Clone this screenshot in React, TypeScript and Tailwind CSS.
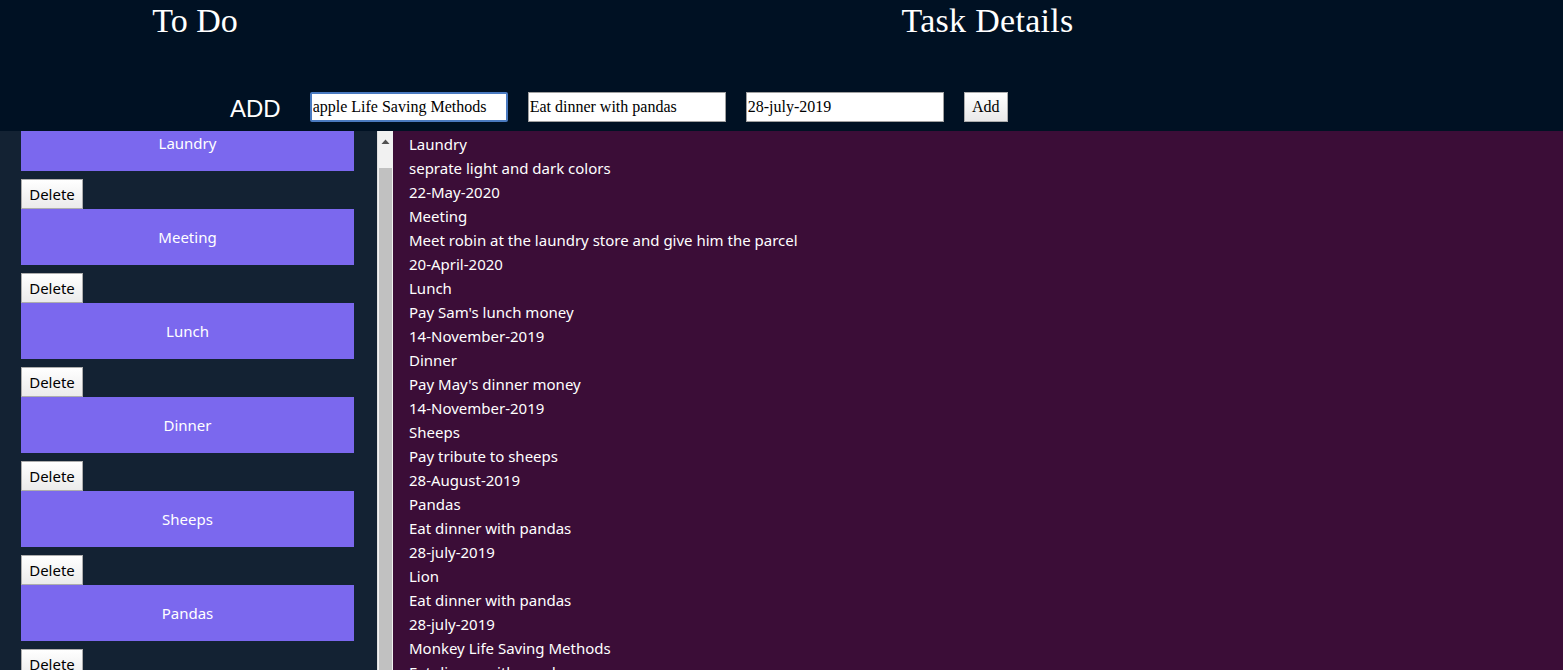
import React from "react";

const tasks = [
  { title: "Laundry", desc: "seprate light and dark colors", date: "22-May-2020" },
  { title: "Meeting", desc: "Meet robin at the laundry store and give him the parcel", date: "20-April-2020" },
  { title: "Lunch", desc: "Pay Sam's lunch money", date: "14-November-2019" },
  { title: "Dinner", desc: "Pay May's dinner money", date: "14-November-2019" },
  { title: "Sheeps", desc: "Pay tribute to sheeps", date: "28-August-2019" },
  { title: "Pandas", desc: "Eat dinner with pandas", date: "28-july-2019" },
  { title: "Lion", desc: "Eat dinner with pandas", date: "28-july-2019" },
  { title: "Monkey Life Saving Methods", desc: "Eat dinner with pandas", date: "28-july-2019" },
];

const sans = "font-['Noto_Sans',sans-serif]";
const serif = "font-['Liberation_Serif',serif]";

export default function App() {
  return (
    <div className="w-[1563px] h-[670px] overflow-hidden flex flex-col">
      <header className="h-[131px] shrink-0 bg-[#001123] flex flex-col">
        <div className={`flex text-white text-[34px] leading-[39px] pt-[1px] ${serif}`}>
          <div className="w-[390px] text-center">To Do</div>
          <div className="flex-1 text-center pl-[22px] tracking-[0.3px]">Task Details</div>
        </div>
        <div className="flex items-center mt-[51px] pl-[230px]">
          <span className="text-white text-[24px] leading-[28px] font-['Liberation_Sans',sans-serif] mt-[4px]">ADD</span>
          <input
            className={`ml-[29px] w-[198px] h-[30px] bg-white border-2 border-[#4a7ac0] rounded-[2px] px-[1px] text-[16px] text-black outline-none ${serif}`}
            defaultValue="apple Life Saving Methods"
          />
          <input
            className={`ml-[20px] w-[198px] h-[30px] bg-white border border-[#a0a0a0] px-[1px] text-[16px] text-black outline-none ${serif}`}
            defaultValue="Eat dinner with pandas"
          />
          <input
            className={`ml-[20px] w-[198px] h-[30px] bg-white border border-[#a0a0a0] px-[1px] text-[16px] text-black outline-none ${serif}`}
            defaultValue="28-july-2019"
          />
          <button
            className={`ml-[20px] w-[44px] h-[30px] bg-gradient-to-b from-white to-[#e9e9e9] border border-[#adadad] text-[16px] text-black ${serif}`}
          >
            Add
          </button>
        </div>
      </header>
      <div className="flex flex-1 min-h-0">
        <div className="w-[377px] bg-[#132233] overflow-hidden">
          <div className="-mt-[16px] pl-[21px] flex flex-col">
            {tasks.map((t) => (
              <div key={t.title} className="flex flex-col items-start">
                <div className={`w-[333px] h-[56px] bg-[#7b68ee] text-white text-[15px] flex items-center justify-center ${sans}`}>
                  {t.title}
                </div>
                <button
                  className={`mt-[8px] w-[62px] h-[30px] bg-gradient-to-b from-white to-[#ebebeb] border border-[#adadad] text-[15px] text-black leading-none ${sans}`}
                >
                  Delete
                </button>
              </div>
            ))}
          </div>
        </div>
        <div className="w-[16px] bg-[#f1f1f1] border-l border-[#e0e0e0] flex flex-col items-center">
          <svg width="9" height="6" viewBox="0 0 9 6" className="mt-[8px]">
            <polygon points="4.5,0.5 8.5,5 0.5,5" fill="#505050" />
          </svg>
          <div className="mt-[23px] w-[13px] flex-1 bg-[#c1c1c1]" />
        </div>
        <div className={`flex-1 bg-[#3b0d37] text-white text-[15px] leading-[24px] pl-[16px] pt-[1px] ${sans}`}>
          {tasks.map((t) => (
            <div key={t.title}>
              <div>{t.title}</div>
              <div>{t.desc}</div>
              <div>{t.date}</div>
            </div>
          ))}
        </div>
      </div>
    </div>
  );
}
